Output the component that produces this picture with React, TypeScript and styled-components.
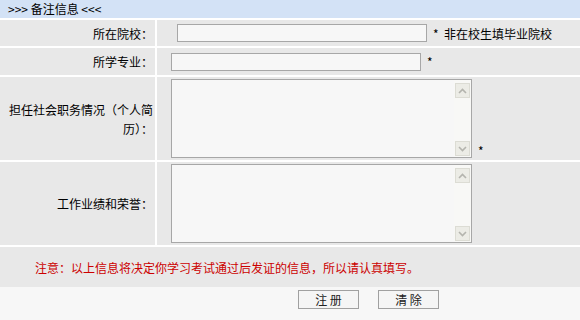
import React from 'react';
import styled, { createGlobalStyle } from 'styled-components';

const GlobalStyle = createGlobalStyle`
  html, body {
    margin: 0;
    padding: 0;
    background: #f7f7f7;
    font-family: "Noto Sans CJK SC", "Liberation Sans", sans-serif;
    font-size: 12px;
    color: #000;
  }
`;

const Page = styled.div`
  width: 580px;
  height: 320px;
  background: #f7f7f7;
  overflow: hidden;
`;

const Header = styled.div`
  height: 18px;
  line-height: 18px;
  padding-left: 8px;
  background: #d3e2f6;
  color: #000;
  white-space: pre;
`;

const Form = styled.div`
  display: grid;
  grid-template-columns: 155px 1fr;
  grid-template-rows: 26px 27px 83px 83px 40px;
  gap: 2px;
  padding-top: 2px;
  background: #fff;
`;

const Label = styled.div`
  background: #e8e8e8;
  display: flex;
  align-items: center;
  justify-content: flex-end;
  text-align: right;
  padding: 0 2px 0 8px;
  line-height: 19px;
`;

const Field = styled.div<{ $indent?: number }>`
  background: #e8e8e8;
  display: flex;
  align-items: center;
  padding-left: ${p => p.$indent ?? 14}px;
`;

const AreaField = styled(Field)`
  align-items: flex-start;
  padding-top: 2px;
`;

const TextInput = styled.input`
  box-sizing: border-box;
  width: 250px;
  height: 18px;
  margin: 0;
  padding: 0 2px;
  border: 1px solid #a7a7a7;
  background: #f7f7f7;
  font: inherit;
  outline: none;
`;

const Hint = styled.span`
  margin-left: 6px;
  white-space: pre;
`;

const AreaBox = styled.div`
  box-sizing: border-box;
  width: 301px;
  height: 79px;
  border: 1px solid #a7a7a7;
  background: #f7f7f7;
  display: flex;
`;

const Area = styled.textarea`
  flex: 1;
  border: none;
  margin: 0;
  padding: 2px;
  background: transparent;
  resize: none;
  outline: none;
  overflow: hidden;
  font: inherit;
`;

const ScrollTrack = styled.div`
  width: 17px;
  display: flex;
  flex-direction: column;
  justify-content: space-between;
  align-items: center;
  padding: 3px 0 1px;
  background: #f8f8f6;
`;

const ScrollBtn = styled.div`
  box-sizing: border-box;
  width: 15px;
  height: 15px;
  background: #ecece6;
  border: 1px solid #dcdcd4;
  display: flex;
  align-items: center;
  justify-content: center;
`;

const Star = styled.span`
  align-self: flex-end;
  margin: 0 0 3px 6px;
  line-height: 12px;
`;

const Note = styled.div`
  grid-column: 1 / span 2;
  background: #e8e8e8;
  display: flex;
  align-items: center;
  padding-left: 35px;
  color: #cc0000;
`;

const Actions = styled.div`
  display: grid;
  grid-template-columns: 155px 1fr;
  gap: 2px;
  padding-top: 3px;
`;

const ButtonGroup = styled.div`
  grid-column: 2;
  display: flex;
  justify-content: center;
  gap: 19px;
`;

const Button = styled.button`
  box-sizing: border-box;
  width: 61px;
  height: 19px;
  padding: 0;
  border: 1px solid #a0a0a0;
  background: #f5f5f5;
  color: #222;
  font: inherit;
  line-height: 17px;
  white-space: pre;
`;

const Chevron = ({ up }: { up?: boolean }) => (
  <svg width="9" height="6" viewBox="0 0 9 6">
    <polyline
      points={up ? '1,5 4.5,1.5 8,5' : '1,1 4.5,4.5 8,1'}
      fill="none"
      stroke="#b4b4ae"
      strokeWidth="1.6"
    />
  </svg>
);

const TextArea = () => (
  <AreaBox>
    <Area />
    <ScrollTrack>
      <ScrollBtn><Chevron up /></ScrollBtn>
      <ScrollBtn><Chevron /></ScrollBtn>
    </ScrollTrack>
  </AreaBox>
);

const App = () => (
  <Page>
    <GlobalStyle />
    <Header>{'>>> 备注信息 <<<'}</Header>
    <Form>
      <Label>所在院校：</Label>
      <Field $indent={20}>
        <TextInput />
        <Hint>{'*  非在校生填毕业院校'}</Hint>
      </Field>

      <Label>所学专业：</Label>
      <Field>
        <TextInput />
        <Hint>*</Hint>
      </Field>

      <Label>担任社会职务情况（个人简历）：</Label>
      <AreaField>
        <TextArea />
        <Star>*</Star>
      </AreaField>

      <Label>工作业绩和荣誉：</Label>
      <AreaField>
        <TextArea />
      </AreaField>

      <Note>注意：以上信息将决定你学习考试通过后发证的信息，所以请认真填写。</Note>
    </Form>
    <Actions>
      <ButtonGroup>
        <Button>{'注 册'}</Button>
        <Button>{'清 除'}</Button>
      </ButtonGroup>
    </Actions>
  </Page>
);

export default App;
